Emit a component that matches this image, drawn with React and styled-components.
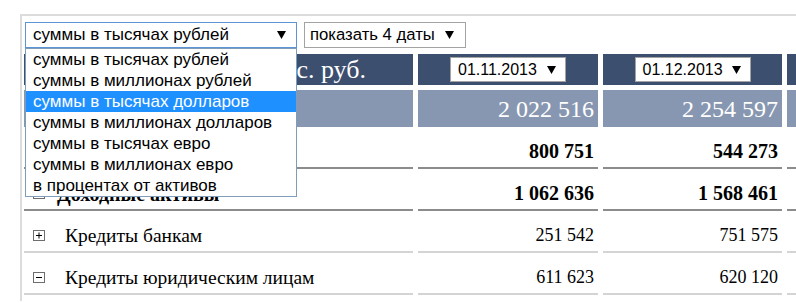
import React from 'react'
import styled, { createGlobalStyle } from 'styled-components';

const GlobalStyle = createGlobalStyle`
    body {
        margin: 0;
        background: #ffffff;
        font-family: "Liberation Serif", serif;
    }
`;

const COLS = '389px 180px 179px 180px';

const Frame = styled.div`
    margin: 14px 0 0 20px;
    border-top: 2px solid #dcdcdc;
    border-left: 2px solid #dcdcdc;
    padding: 6px 0 0 2px;
    height: 287px;
    overflow: hidden;
    box-sizing: border-box;
`;

const Toolbar = styled.div`
    display: flex;
    gap: 7px;
    padding-left: 1px;
    margin-bottom: 6px;
`;

const SelectWrap = styled.div`
    position: relative;
`;

const Select = styled.div`
    box-sizing: border-box;
    width: ${props => props.width}px;
    height: ${props => props.height || 26}px;
    display: flex;
    align-items: center;
    justify-content: space-between;
    padding: 0 ${props => props.padRight || 10}px 0 ${props => props.padLeft || 7}px;
    background: #ffffff;
    border: 1px solid ${props => props.focused ? '#5b95d6' : '#a3a3a3'};
    font-family: "Liberation Sans", Arial, sans-serif;
    font-size: ${props => props.size || 16.7}px;
    color: #000000;
    white-space: nowrap;
`;

const Dropdown = styled.ul`
    position: absolute;
    top: 100%;
    left: 0;
    z-index: 10;
    box-sizing: border-box;
    width: 272px;
    margin: 0;
    padding: 0;
    list-style: none;
    background: #ffffff;
    border: 1px solid #7f9db9;
    font-family: "Liberation Sans", Arial, sans-serif;
    font-size: 17px;
`;

const Option = styled.li`
    height: 21px;
    line-height: 22px;
    padding-left: 7px;
    color: ${props => props.active ? '#ffffff' : '#000000'};
    background: ${props => props.active ? '#1e90ff' : 'transparent'};
    white-space: nowrap;
`;

const Table = styled.div`
    display: flex;
    flex-direction: column;
    gap: 5px;
`;

const Row = styled.div`
    display: grid;
    grid-template-columns: ${COLS};
    column-gap: 5px;
`;

const HeadCell = styled.div`
    height: 31px;
    background: #3d4f6f;
    display: flex;
    align-items: center;
    justify-content: ${props => props.caption ? 'flex-end' : 'center'};
    padding-right: ${props => props.caption ? 47 : 0}px;
    color: #ffffff;
    font-size: 26px;
    white-space: nowrap;
    overflow: hidden;
`;

const TotalCell = styled.div`
    height: 37px;
    background: #8897b1;
    color: #ffffff;
    font-size: 24px;
    display: flex;
    align-items: center;
    justify-content: flex-end;
    padding: 2px 4px 0 0;
    box-sizing: border-box;
`;

const DataCell = styled.div`
    height: 37px;
    box-sizing: border-box;
    border-bottom: 2px solid ${props => props.bold ? '#8c8c8c' : '#d4d4d4'};
    display: flex;
    align-items: center;
    justify-content: ${props => props.label ? 'flex-start' : 'flex-end'};
    padding: 3px 4px 0 9px;
    font-size: ${props => props.bold ? 20 : 18}px;
    font-weight: ${props => props.bold ? 700 : 400};
    color: #000000;
    white-space: nowrap;
`;

const LabelText = styled.span`
    margin-left: ${props => props.indent}px;
    font-size: ${props => props.bold ? 20 : 19.5}px;
    padding-top: 2px;
`;

const Arrow = () => (
    <svg width="9" height="8" viewBox="0 0 9 8">
        <polygon points="0,0 9,0 4.5,8" fill="#000" />
    </svg>
);

const Toggle = ({ open }) => (
    <svg width="12" height="11" viewBox="0 0 12 11">
        <rect x="0.5" y="0.5" width="11" height="10" fill="#fff" stroke="#6e6e6e" />
        <rect x="3" y="5" width="6" height="1" fill="#000" />
        {!open && <rect x="5.5" y="2.5" width="1" height="6" fill="#000" />}
    </svg>
);

const options = [
    'суммы в тысячах рублей',
    'суммы в миллионах рублей',
    'суммы в тысячах долларов',
    'суммы в миллионах долларов',
    'суммы в тысячах евро',
    'суммы в миллионах евро',
    'в процентах от активов',
];

const dates = ['01.11.2013', '01.12.2013', '01.01.2014'];
const totals = ['2 022 516', '2 254 597', '2 301 884'];

const rows = [
    { label: 'Денежные средства', bold: true, open: true, values: ['800 751', '544 273', '512 904'] },
    { label: 'Доходные активы', bold: true, open: true, values: ['1 062 636', '1 568 461', '1 602 118'] },
    { label: 'Кредиты банкам', values: ['251 542', '751 575', '733 210'] },
    { label: 'Кредиты юридическим лицам', open: true, values: ['611 623', '620 120', '648 407'] },
];

const App = () => (
    <>
        <GlobalStyle />
        <Frame>
            <Toolbar>
                <SelectWrap>
                    <Select width={272} size={17} focused>
                        <span>суммы в тысячах рублей</span>
                        <Arrow />
                    </Select>
                    <Dropdown>
                        {options.map((o, i) => (
                            <Option key={o} active={i === 2}>{o}</Option>
                        ))}
                    </Dropdown>
                </SelectWrap>
                <Select width={162} padLeft={5} padRight={11}>
                    <span>показать 4 даты</span>
                    <Arrow />
                </Select>
            </Toolbar>
            <Table>
                <Row>
                    <HeadCell caption>суммы в тыс. руб.</HeadCell>
                    {dates.map(d => (
                        <HeadCell key={d}>
                            <Select width={116} height={25} padRight={9} size={16}>
                                <span>{d}</span>
                                <Arrow />
                            </Select>
                        </HeadCell>
                    ))}
                </Row>
                <Row>
                    <TotalCell />
                    {totals.map(t => <TotalCell key={t}>{t}</TotalCell>)}
                </Row>
                {rows.map(r => (
                    <Row key={r.label}>
                        <DataCell label bold={r.bold}>
                            <Toggle open={r.open} />
                            <LabelText bold={r.bold} indent={r.bold ? 12 : 20}>{r.label}</LabelText>
                        </DataCell>
                        {r.values.map((v, i) => (
                            <DataCell key={i} bold={r.bold}>{v}</DataCell>
                        ))}
                    </Row>
                ))}
            </Table>
        </Frame>
    </>
)

export default App;
